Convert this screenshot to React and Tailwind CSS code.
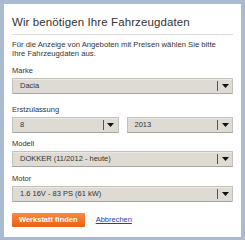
const font = { fontFamily: '"Liberation Sans", Arial, sans-serif' }

function Select({ value, className = '' }) {
  return (
    <div
      className={`flex h-[16px] items-stretch rounded-[1px] border border-[#c4c1ba] border-b-[#a9a69f] bg-[#dedbd5] shadow-[inset_0_1px_0_#ebe9e5] ${className}`}
    >
      <div className="flex flex-1 items-center truncate pl-[7px] text-[7.5px] text-[#333]">{value}</div>
      <div className="my-[2px] w-px bg-[#555]" />
      <div className="flex w-[14px] items-center justify-center">
        <svg width="7" height="4" viewBox="0 0 7 4">
          <path d="M0 0H7L3.5 4Z" fill="#111" />
        </svg>
      </div>
    </div>
  )
}

function Label({ children }) {
  return <p className="mb-[2px] text-[7.5px] leading-[10px] text-[#333]">{children}</p>
}

export default function App() {
  return (
    <div className="h-[240px] w-[245px] bg-[#a9bbd0] p-[4px] pb-[3px]" style={font}>
      <div className="flex h-full flex-col bg-white px-[8px] pt-[11px]">
        <h1 className="text-[11.5px] leading-[14px] tracking-[0.1px] text-[#333]">Wir benötigen Ihre Fahrzeugdaten</h1>
        <div className="mt-[5px] h-px bg-[#dcdcdc]" />
        <p className="mt-[5px] max-w-[212px] text-[7.7px] leading-[9px] text-[#333]">
          Für die Anzeige von Angeboten mit Preisen wählen Sie bitte Ihre Fahrzeugdaten aus.
        </p>

        <div className="mt-[8px]">
          <Label>Marke</Label>
          <Select value="Dacia" />
        </div>

        <div className="mt-[11px]">
          <Label>Erstzulassung</Label>
          <div className="flex gap-[8px]">
            <Select value="8" className="flex-1" />
            <Select value="2013" className="flex-1" />
          </div>
        </div>

        <div className="mt-[6px]">
          <Label>Modell</Label>
          <Select value="DOKKER (11/2012 - heute)" />
        </div>

        <div className="mt-[7px]">
          <Label>Motor</Label>
          <Select value="1.6 16V - 83 PS (61 kW)" />
        </div>

        <div className="mt-[11px] flex items-center gap-[11px]">
          <button className="h-[14px] rounded-[1px] bg-gradient-to-b from-[#fb8a3e] to-[#ec5f0e] px-[7px] text-[7.5px] font-bold leading-[14px] text-white">
            Werkstatt finden
          </button>
          <a href="#" className="text-[7.5px] text-[#1d3fb8] underline">
            Abbrechen
          </a>
        </div>
      </div>
    </div>
  )
}
